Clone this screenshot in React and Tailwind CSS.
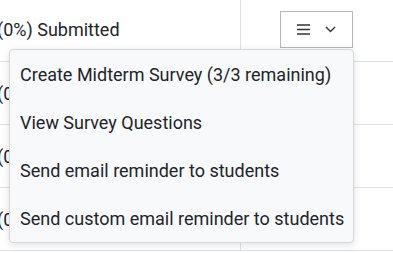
import React from "react";

function Row({ first, children, right }) {
  return (
    <div className={`flex border-b border-[#dee2e6] ${first ? "h-[64px]" : "h-[63px]"}`}>
      <div className="w-[241px] shrink-0 border-r border-[#dee2e6] flex items-center overflow-hidden">
        {children}
      </div>
      <div className="flex-1 flex items-center">{right}</div>
    </div>
  );
}

export default function App() {
  return (
    <div
      className="relative w-[393px] h-[253px] bg-white overflow-hidden text-[#212529]"
      style={{ fontFamily: "Roboto, 'Liberation Sans', sans-serif" }}
    >
      <div className="-mt-[2px]">
        <Row
          first
          right={
            <button className="ml-[39px] w-[73px] h-[37px] border border-[#b5b9bd] bg-white flex items-center justify-center gap-[15px]">
              <svg width="13" height="11" viewBox="0 0 13 11">
                <path d="M0 1h13M0 5.5h13M0 10h13" stroke="#333" strokeWidth="1.6" />
              </svg>
              <svg width="11" height="7" viewBox="0 0 11 7">
                <path d="M1 1l4.5 4.5L10 1" stroke="#333" strokeWidth="1.4" fill="none" />
              </svg>
            </button>
          }
        >
          <span className="text-[18px] whitespace-nowrap -ml-[3px]">(0%) Submitted</span>
        </Row>
        <Row>
          <span className="text-[18px] whitespace-nowrap -ml-[3px]">(0%) Submitted</span>
        </Row>
        <Row>
          <span className="text-[18px] whitespace-nowrap -ml-[3px]">(0%) Submitted</span>
        </Row>
        <Row>
          <span className="text-[18px] whitespace-nowrap -ml-[3px]">(0%) Submitted</span>
        </Row>
      </div>

      <div className="absolute left-[9px] top-[49px] w-[345px] bg-[#f8f9fa] border border-[#d4d7db] rounded-[4px] shadow-[0_2px_8px_rgba(0,0,0,0.12)] flex flex-col">
        {[
          "Create Midterm Survey (3/3 remaining)",
          "View Survey Questions",
          "Send email reminder to students",
          "Send custom email reminder to students",
        ].map((t) => (
          <div key={t} className="h-[48px] flex items-center pl-[10px] text-[18px] whitespace-nowrap text-[#212529]">
            {t}
          </div>
        ))}
      </div>
    </div>
  );
}
